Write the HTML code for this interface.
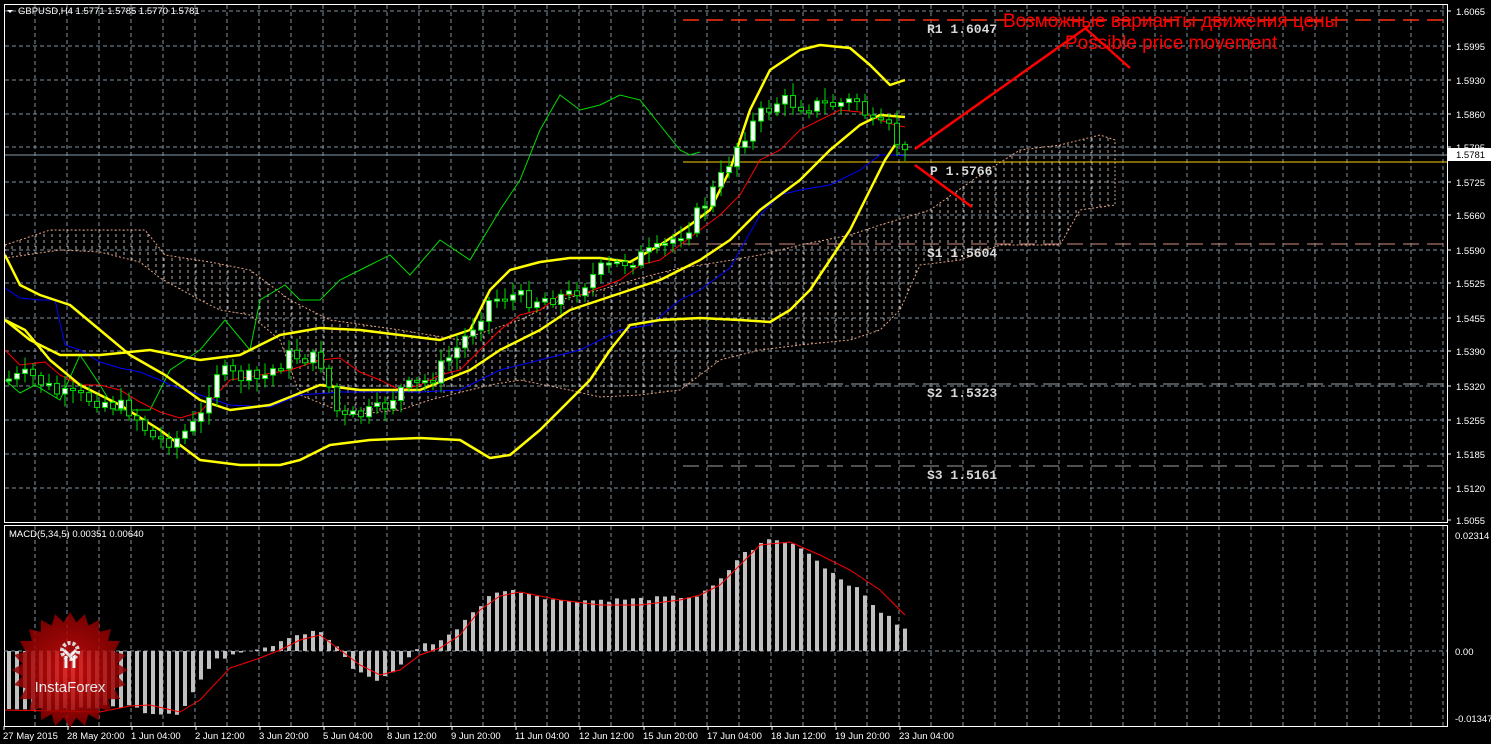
<!DOCTYPE html>
<html><head><meta charset="utf-8"><style>
html,body{margin:0;padding:0;background:#000;width:1491px;height:744px;overflow:hidden}
svg{display:block}
text{font-family:"Liberation Sans",sans-serif}
</style></head><body>
<svg id="s" width="1491" height="744" xmlns="http://www.w3.org/2000/svg">
<defs>
<pattern id="hatch" width="8" height="6" patternUnits="userSpaceOnUse">
<line x1="4" y1="0" x2="4" y2="3" stroke="#f0d8c8" stroke-width="1" opacity="0.8"/>
</pattern>
<radialGradient id="lg" cx="50%" cy="50%" r="50%"><stop offset="0" stop-color="#e01010"/><stop offset="1" stop-color="#8a0000"/></radialGradient>
</defs>
<rect width="1491" height="744" fill="#000"/>
<g id="grid" stroke="#8090a0" stroke-dasharray="4,3" stroke-width="1"></g>
<polygon fill="url(#hatch)" stroke="#e0a080" stroke-dasharray="2,2" stroke-width="1" points="5,245 50,230 145,230 165,255 210,262 250,270 290,300 330,320 400,330 460,340 490,330 520,320 560,300 600,290 640,278 680,268 720,262 760,255 800,245 850,235 880,225 930,210 980,175 1020,150 1060,145 1100,135 1115,140 1115,205 1080,210 1060,245 1000,245 960,260 920,265 900,310 880,330 850,340 800,345 760,350 720,360 680,390 640,395 600,397 560,388 520,380 490,385 470,390 430,400 400,410 350,415 300,395 280,340 250,315 220,310 200,300 160,278 140,262 100,252 60,250 5,258"/>
<line x1="683" y1="20" x2="1447" y2="20" stroke="#ff3010" stroke-width="1.5" stroke-dasharray="16,8"/>
<line x1="683" y1="244" x2="1447" y2="244" stroke="#d09080" stroke-width="1" stroke-dasharray="16,8"/>
<line x1="683" y1="384" x2="1447" y2="384" stroke="#a0a0a0" stroke-width="1" stroke-dasharray="16,8"/>
<line x1="683" y1="466" x2="1447" y2="466" stroke="#a0a0a0" stroke-width="1" stroke-dasharray="16,8"/>
<line x1="4" y1="155" x2="1447" y2="155" stroke="#8a9aa8" stroke-width="1"/>
<line x1="683" y1="162" x2="1447" y2="162" stroke="#ffd000" stroke-width="1"/>
<g font-size="13" fill="#d8d8d8" font-weight="bold">
<text x="927" y="33" style="font-family:'Liberation Mono',monospace">R1 1.6047</text>
<text x="930" y="175" style="font-family:'Liberation Mono',monospace">P 1.5766</text>
<text x="927" y="257" style="font-family:'Liberation Mono',monospace">S1 1.5604</text>
<text x="927" y="397" style="font-family:'Liberation Mono',monospace">S2 1.5323</text>
<text x="927" y="479" style="font-family:'Liberation Mono',monospace">S3 1.5161</text>
</g>
<polyline fill="none" stroke="#00dd00" stroke-width="1" points="5,380 20,393 35,385 60,400 80,355 100,385 115,410 150,410 170,370 200,350 225,320 250,350 260,300 285,285 300,300 320,300 340,280 370,265 390,255 410,275 440,240 470,260 500,210 520,180 540,130 560,95 580,110 600,105 620,95 640,100 660,125 680,150 690,155 700,152"/>
<polyline fill="none" stroke="#0000ff" stroke-width="1" points="5,288 20,298 40,300 55,300 65,345 80,350 100,362 120,368 140,372 160,380 170,385 200,395 230,405 270,407 300,395 340,392 380,392 420,392 460,390 480,380 500,370 540,360 580,350 620,330 650,325 680,300 700,290 730,268 760,215 780,195 800,190 830,185 860,170 880,155 895,155 905,156"/>
<polyline fill="none" stroke="#ff0000" stroke-width="1" points="5,350 20,365 45,362 60,375 80,385 100,385 120,390 140,402 160,412 180,418 200,412 230,380 260,375 290,370 320,360 340,358 360,372 380,380 400,390 420,385 440,375 460,370 480,350 500,330 520,315 540,310 560,295 580,295 620,280 640,265 660,260 680,245 700,230 720,215 740,195 760,160 780,150 800,130 820,120 840,110 860,112 880,120 895,125 905,127"/>
<g fill="none" stroke="#ffff00" stroke-width="2.5" stroke-linejoin="round">
<polyline points="5,320 30,340 60,355 100,355 150,350 200,360 240,355 280,335 320,328 360,330 400,335 440,340 470,330 490,290 510,270 540,262 570,258 600,258 630,262 660,245 690,225 710,210 730,170 750,110 770,70 800,50 820,45 850,48 870,65 890,85 905,80"/>
<polyline points="5,255 20,285 40,295 70,305 100,330 130,355 165,375 200,400 230,410 270,405 320,385 360,390 420,390 470,370 500,350 540,330 570,310 600,300 630,290 660,280 700,260 730,240 760,210 800,180 830,150 860,125 880,115 905,117"/>
<polyline points="5,320 25,330 50,360 80,385 120,405 160,430 200,460 240,465 280,465 300,460 330,445 370,440 420,438 460,440 490,458 510,455 540,430 570,400 590,380 610,350 630,325 660,320 700,318 740,320 770,322 790,310 810,290 830,260 850,230 870,190 885,160 895,145"/>
</g>
<g id="candles"></g>
<g stroke="#ff0000" stroke-width="2.5">
<line x1="915" y1="149" x2="1090" y2="25"/>
<line x1="1085" y1="28" x2="1130" y2="68"/>
<line x1="915" y1="165" x2="972" y2="207"/>
</g>
<text x="1003" y="27" fill="#ff0000" font-size="19">Возможные варианты движения цены</text>
<text x="1065" y="49" fill="#ff0000" font-size="19">Possible price movement</text>
<rect x="4.5" y="4.5" width="1443" height="518" fill="none" stroke="#fff" stroke-width="1"/>
<rect x="4.5" y="525.5" width="1443" height="201" fill="none" stroke="#fff" stroke-width="1"/>
<line x1="4" y1="651" x2="1447" y2="651" stroke="#8090a0" stroke-dasharray="4,3"/>
<g id="macd"></g>
<polyline fill="none" stroke="#ff0000" stroke-width="1" points="5,710 100,712 130,706 150,705 180,712 200,700 230,668 260,658 280,650 300,640 320,635 340,650 360,665 380,675 400,670 420,655 440,648 460,635 480,610 500,596 520,592 560,600 600,605 640,605 680,600 700,595 720,585 740,565 760,545 790,542 820,555 850,570 880,590 905,615"/>
<g opacity="0.85">
<polygon id="star" fill="url(#lg)"/>
<circle cx="70" cy="651" r="8" fill="none" stroke="#fff" stroke-width="4" stroke-dasharray="3,2"/>
<path d="M66 656 L66 668 M74 656 L74 668 M64 650 L70 656 L76 650" stroke="#fff" stroke-width="3" fill="none"/>
<text x="70" y="692" fill="#fff" font-size="15" text-anchor="middle">InstaForex</text>
</g>
<polygon points="7,10 13,10 10,13" fill="#fff"/>
<text x="18" y="14" fill="#fff" font-size="9.5">GBPUSD,H4  1.5771 1.5785 1.5770 1.5781</text>
<text x="9" y="537" fill="#fff" font-size="9.5">MACD(5,34,5) 0.00351 0.00640</text>
<g id="axis" fill="#fff" font-size="9.5"></g>
<rect x="1448" y="148" width="43" height="13" fill="#fff"/>
<text x="1456" y="158" fill="#000" font-size="9.5">1.5781</text>
</svg>
<script>
(function(){
var NS="http://www.w3.org/2000/svg";
function el(p,t,a,txt){var e=document.createElementNS(NS,t);for(var k in a)e.setAttribute(k,a[k]);if(txt)e.textContent=txt;p.appendChild(e);return e;}
var g=document.getElementById('grid');
for(var x=35;x<1447;x+=32){el(g,'line',{x1:x,y1:5,x2:x,y2:522});el(g,'line',{x1:x,y1:526,x2:x,y2:726});}
var lv=[["1.6065",11],["1.5995",46],["1.5930",80],["1.5860",114],["1.5795",147],["1.5725",182],["1.5660",215],["1.5590",250],["1.5525",283],["1.5455",318],["1.5390",351],["1.5320",386],["1.5255",420],["1.5185",454],["1.5120",488],["1.5055",520]];
var ax=document.getElementById('axis');
lv.forEach(function(l){if(l[1]<520)el(g,'line',{x1:5,y1:l[1],x2:1447,y2:l[1]});el(ax,'line',{x1:1447,y1:l[1],x2:1451,y2:l[1],stroke:'#fff'});el(ax,'text',{x:1456,y:l[1]+4},l[0]);});
[["0.02314",535],["0.00",651],["-0.01347",718]].forEach(function(l){el(ax,'text',{x:1455,y:l[1]+4},l[0]);});
var d=["27 May 2015","28 May 20:00","1 Jun 04:00","2 Jun 12:00","3 Jun 20:00","5 Jun 04:00","8 Jun 12:00","9 Jun 20:00","11 Jun 04:00","12 Jun 12:00","15 Jun 20:00","17 Jun 04:00","18 Jun 12:00","19 Jun 20:00","23 Jun 04:00"];
d.forEach(function(t,i){el(ax,'text',{x:3+64*i,y:739},t);el(ax,'line',{x1:4+64*i,y1:726,x2:4+64*i,y2:730,stroke:'#fff'});});
function interp(pts,x){for(var i=1;i<pts.length;i++){if(x<=pts[i][0]){var a=pts[i-1],b=pts[i];return a[1]+(b[1]-a[1])*(x-a[0])/(b[0]-a[0]);}}return pts[pts.length-1][1];}
var cp=[[5,380],[30,375],[60,395],[100,400],[130,410],[155,440],[175,440],[200,420],[215,370],[230,375],[260,380],[290,355],[320,360],[340,420],[360,415],[380,410],[400,390],[430,380],[460,345],[490,300],[510,295],[530,300],[570,295],[600,270],[630,260],[660,250],[690,225],[720,180],[740,140],[760,115],[780,100],[800,105],[830,105],[860,100],[870,125],[890,130],[905,155]];
var seed=7;function rnd(){seed=(seed*9301+49297)%233280;return seed/233280;}
var C=document.getElementById('candles'),prev=380;
for(var i=0;i<113;i++){var cx=9+8*i,c=interp(cp,cx)+(rnd()-0.5)*16,o=prev;prev=c;var tp=Math.min(o,c),bt=Math.max(o,c);if(bt-tp<2)bt=tp+2;
el(C,'line',{x1:cx,y1:tp-3-rnd()*10,x2:cx,y2:bt+3+rnd()*10,stroke:'#00dd00'});
el(C,'rect',{x:cx-2.5,y:tp,width:5,height:bt-tp,fill:(c<o?'#fff':'#000'),stroke:'#00dd00','stroke-width':1});}
var mp=[[9,-60],[130,-55],[150,-62],[180,-62],[200,-30],[215,-10],[240,0],[270,5],[290,15],[320,20],[340,0],[355,-20],[380,-30],[400,-15],[420,5],[440,10],[460,25],[480,45],[495,60],[520,60],[560,50],[640,52],[700,55],[720,70],[740,95],[770,112],[800,105],[830,80],[860,60],[880,40],[907,20]];
var M=document.getElementById('macd');
for(var j=0;j<113;j++){var mx=9+8*j,h=interp(mp,mx)+(rnd()-0.5)*4;el(M,'rect',{x:mx-2,y:h>0?651-h:651,width:4,height:Math.abs(h),fill:'#c0c0c0'});}
var pts=[];for(var k=0;k<48;k++){var a=k*Math.PI*2/48,r=k%2?48:58;pts.push((70+r*Math.cos(a)).toFixed(1)+','+(670+r*Math.sin(a)).toFixed(1));}
document.getElementById('star').setAttribute('points',pts.join(' '));
})();
</script>
</body></html>
